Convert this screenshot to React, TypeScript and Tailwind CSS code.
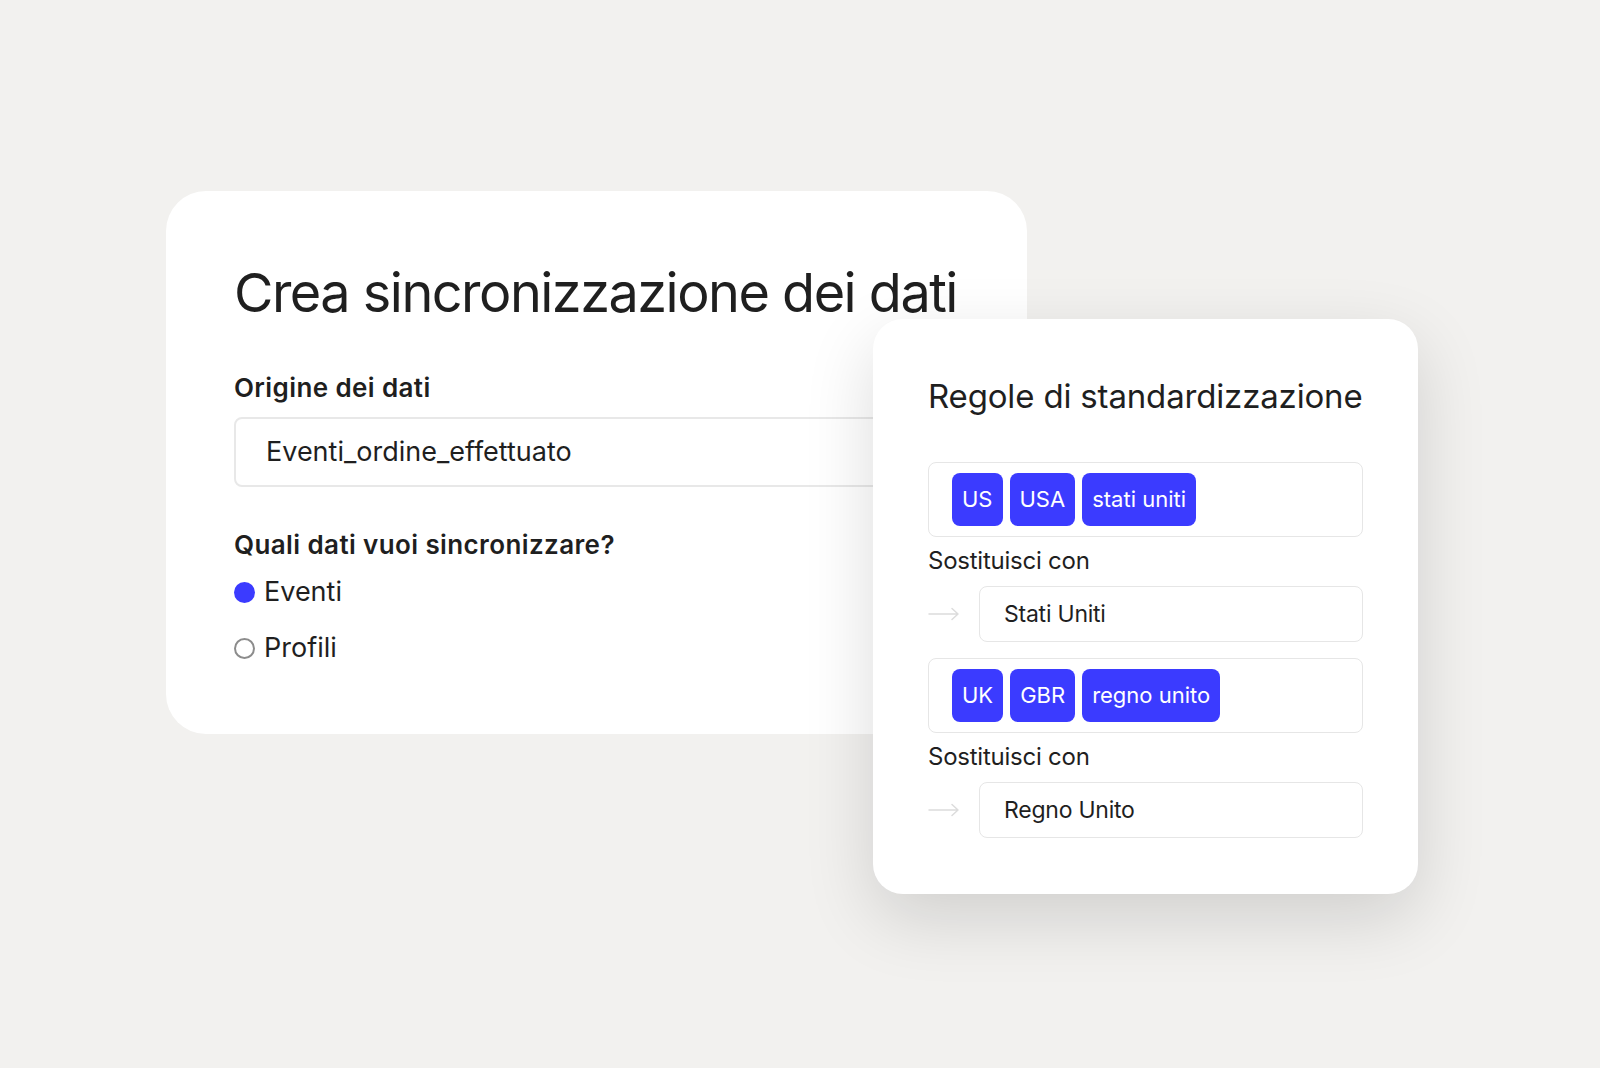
import { useState } from 'react'

type Rule = {
  id: string
  aliases: string[]
  replacement: string
}

const rules: Rule[] = [
  { id: 'us', aliases: ['US', 'USA', 'stati uniti'], replacement: 'Stati Uniti' },
  { id: 'uk', aliases: ['UK', 'GBR', 'regno unito'], replacement: 'Regno Unito' },
]

function Arrow() {
  return (
    <svg width="32" height="14" viewBox="0 0 32 14" fill="none" className="shrink-0">
      <path d="M1 7h29M24 1.5 30 7l-6 5.5" stroke="#dcdcdc" strokeWidth="1.5" strokeLinecap="round" strokeLinejoin="round" />
    </svg>
  )
}

function RadioOption({ label, checked, onSelect }: { label: string; checked: boolean; onSelect: () => void }) {
  return (
    <button onClick={onSelect} className="flex items-center gap-[9px] text-left">
      {checked ? (
        <span className="w-[21px] h-[21px] rounded-full bg-[#3b3bff] shrink-0" />
      ) : (
        <span className="w-[21px] h-[21px] rounded-full border-2 border-[#8c8c8c] shrink-0" />
      )}
      <span className="text-[27px] leading-[36px] text-[#1f1f1f]">{label}</span>
    </button>
  )
}

function RuleBlock({ rule }: { rule: Rule }) {
  return (
    <div>
      <div className="flex items-center gap-[7px] h-[75px] border border-[#e6e6e6] rounded-[8px] px-[23px]">
        {rule.aliases.map((alias) => (
          <span
            key={alias}
            className="h-[53px] flex items-center px-[10px] rounded-[8px] bg-[#3b3bff] text-white text-[22px]"
          >
            {alias}
          </span>
        ))}
      </div>
      <p className="mt-2 mb-[9px] text-[24px] leading-[32px] text-[#1f1f1f] tracking-[-0.01em]">Sostituisci con</p>
      <div className="flex items-center gap-[19px]">
        <Arrow />
        <div className="flex-1 h-[56px] flex items-center border border-[#e6e6e6] rounded-[8px] px-[24px] text-[23px] text-[#1f1f1f] tracking-[-0.01em]">
          {rule.replacement}
        </div>
      </div>
    </div>
  )
}

export default function App() {
  const [source, setSource] = useState<'eventi' | 'profili'>('eventi')

  return (
    <div className="min-h-screen bg-[#f2f1ef] pt-[191px] pl-[166px] font-['Inter',sans-serif]">
      <div className="relative w-[861px]">
        <section className="bg-white rounded-[40px] p-[68px]">
          <h1 className="text-[54px] leading-[67px] text-[#1f1f1f] tracking-[-0.028em] whitespace-nowrap">
            Crea sincronizzazione dei dati
          </h1>
          <h2 className="mt-[46px] text-[26px] leading-[32px] font-semibold text-[#1f1f1f] tracking-[0.015em]">
            Origine dei dati
          </h2>
          <div className="mt-[13px] h-[70px] flex items-center border-2 border-[#e8e8e8] rounded-[8px] px-[30px] text-[27px] text-[#1f1f1f]">
            Eventi_ordine_effettuato
          </div>
          <h2 className="mt-[42px] text-[26px] leading-[32px] font-semibold text-[#1f1f1f] tracking-[0.015em]">
            Quali dati vuoi sincronizzare?
          </h2>
          <div className="mt-[13px] flex flex-col gap-[20px] items-start">
            <RadioOption label="Eventi" checked={source === 'eventi'} onSelect={() => setSource('eventi')} />
            <RadioOption label="Profili" checked={source === 'profili'} onSelect={() => setSource('profili')} />
          </div>
        </section>

        <section className="absolute left-[707px] top-[128px] w-[545px] bg-white rounded-[30px] px-[55px] pt-[57px] pb-[56px] shadow-[0_24px_70px_rgba(0,0,0,0.14)]">
          <h3 className="text-[33px] leading-[40px] text-[#1f1f1f] tracking-[-0.005em] whitespace-nowrap">
            Regole di standardizzazione
          </h3>
          <div className="mt-[46px] flex flex-col gap-[16px]">
            {rules.map((rule) => (
              <RuleBlock key={rule.id} rule={rule} />
            ))}
          </div>
        </section>
      </div>
    </div>
  )
}
